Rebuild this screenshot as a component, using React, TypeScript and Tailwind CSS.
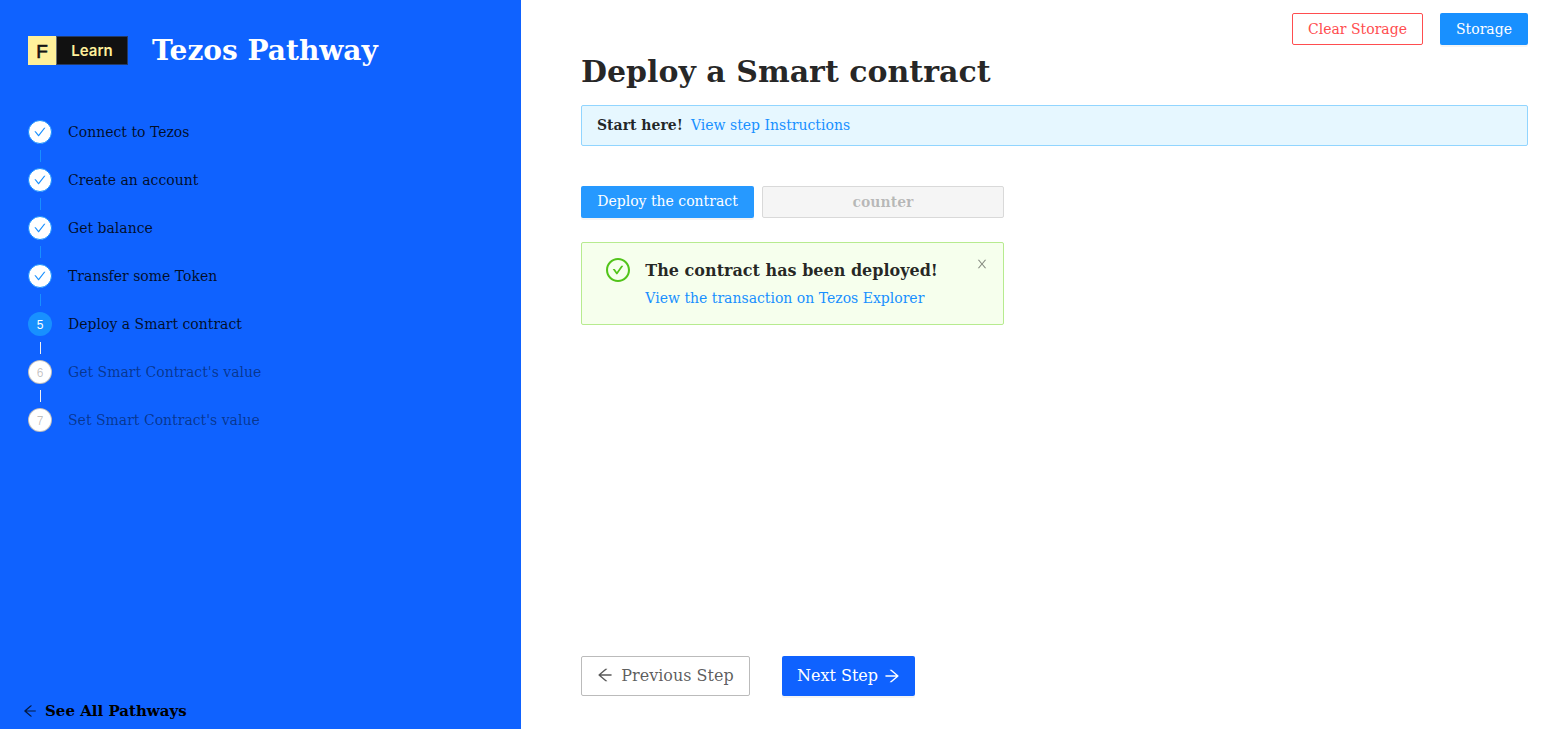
import React from 'react';
import {
  AiOutlineArrowLeft,
  AiOutlineArrowRight,
  AiOutlineCheck,
  AiOutlineCheckCircle,
} from 'react-icons/ai';

const iconBox = '64 64 896 896';

const steps = [
  'Connect to Tezos',
  'Create an account',
  'Get balance',
  'Transfer some Token',
  'Deploy a Smart contract',
  "Get Smart Contract's value",
  "Set Smart Contract's value",
];
const current = 4;

function Logo() {
  return (
    <div className="flex h-[29px] w-[100px] leading-none">
      <div className="flex w-[28px] items-center justify-center bg-[#fff09b] pt-0.5 font-['Liberation_Sans',sans-serif] text-[19px] text-[#141414] [-webkit-text-stroke:0.6px_#141414]">
        F
      </div>
      <div className="flex w-[72px] items-center justify-center border border-[#243a66] border-l-[#6b7070] bg-[#111111] font-['Inter',sans-serif] text-[15px] font-semibold text-[#fff09b]">
        Learn
      </div>
    </div>
  );
}

function CloseIcon() {
  return (
    <svg width="12" height="12" viewBox={iconBox} fill="currentColor" className="text-black/45">
      <path d="M563.8 512l262.5-312.9c4.4-5.2.7-13.1-6.1-13.1h-79.8c-4.7 0-9.2 2.1-12.3 5.7L511.6 449.8 295.1 191.7c-3-3.6-7.5-5.7-12.3-5.7H203c-6.8 0-10.5 7.9-6.1 13.1L459.4 512 196.9 824.9A7.95 7.95 0 00203 838h79.8c4.7 0 9.2-2.1 12.3-5.7l216.5-258.1 216.5 258.1c3 3.6 7.5 5.7 12.3 5.7h79.8c6.8 0 10.5-7.9 6.1-13.1L563.8 512z" />
    </svg>
  );
}

function StepIcon({ index }: { index: number }) {
  if (index < current) {
    return (
      <span className="flex size-6 items-center justify-center rounded-full border border-[#1890ff] bg-white text-[#1890ff]">
        <AiOutlineCheck size={12} viewBox={iconBox} />
      </span>
    );
  }
  if (index === current) {
    return (
      <span className="flex size-6 items-center justify-center rounded-full bg-[#1890ff] pt-px font-['Liberation_Sans',sans-serif] text-xs text-white">
        {index + 1}
      </span>
    );
  }
  return (
    <span className="flex size-6 items-center justify-center rounded-full border border-black/25 bg-white pt-px font-['Liberation_Sans',sans-serif] text-xs text-black/25">
      {index + 1}
    </span>
  );
}

function Sidebar() {
  return (
    <aside className="flex w-[521px] shrink-0 flex-col bg-[#0f62ff]">
      <div className="flex h-[100px] items-center gap-6 pl-7">
        <Logo />
        <h1 className="pt-0.5 text-[28px] leading-10 font-bold text-white">Tezos Pathway</h1>
      </div>
      <ol className="flex flex-col pt-5 pl-7">
        {steps.map((label, i) => (
          <li key={label} className="flex h-12 gap-4">
            <div className="flex w-6 flex-col items-center">
              <StepIcon index={i} />
              {i < steps.length - 1 && (
                <span
                  className={
                    i < current
                      ? 'mt-1.5 ml-px h-3 w-px bg-[#1890ff]'
                      : 'mt-1.5 ml-px h-3 w-px bg-[#f0f0f0]'
                  }
                />
              )}
            </div>
            <span className={i <= current ? 'leading-6 text-black/85' : 'leading-6 text-black/45'}>
              {label}
            </span>
          </li>
        ))}
      </ol>
      <a className="mt-auto flex h-9 items-center gap-2 pl-[23px] text-[#000000]">
        <AiOutlineArrowLeft size={14} viewBox={iconBox} className="text-black/75" />
        <span className="pt-0.5 text-[15px] font-bold">See All Pathways</span>
      </a>
    </aside>
  );
}

export default function App() {
  return (
    <div className="flex h-[729px] w-[1561px] bg-white font-['DejaVu_Serif',serif] text-sm text-black/85">
      <Sidebar />
      <main className="flex flex-1 flex-col pt-[13px] pr-[33px] pb-[33px] pl-[60px]">
        <div className="flex justify-end gap-[17px]">
          <button className="h-8 w-[131px] rounded-[2px] border border-[#ff4d4f] text-[#ff4d4f]">
            Clear Storage
          </button>
          <button className="h-8 w-[88px] rounded-[2px] bg-[#1890ff] text-white shadow-[0_2px_0_rgba(0,0,0,0.045)]">
            Storage
          </button>
        </div>
        <h2 className="mt-[7px] text-[30px] leading-10 font-bold">Deploy a Smart contract</h2>
        <div className="mt-[13px] flex h-[41px] items-center gap-2 rounded-[2px] border border-[#91d5ff] bg-[#e6f7ff] px-[15px] pb-px">
          <strong>Start here!</strong>
          <a className="text-[#1890ff]">View step Instructions</a>
        </div>
        <div className="mt-10 flex w-[423px] gap-2">
          <button className="h-8 w-[173px] rounded-[2px] bg-[#2699ff] pb-0.5 text-white shadow-[0_2px_0_rgba(0,0,0,0.045)]">
            Deploy the contract
          </button>
          <div className="flex h-8 flex-1 items-center justify-center rounded-[2px] border border-[#d9d9d9] bg-[#f5f5f5] font-bold text-black/25">
            counter
          </div>
        </div>
        <div className="mt-6 flex h-[83px] w-[423px] rounded-[2px] border border-[#b7eb8f] bg-[#f6ffed] pt-[15px] pr-[15px] pl-6">
          <AiOutlineCheckCircle size={24} viewBox={iconBox} className="text-[#52c41a]" />
          <div className="ml-[15.33px] flex-1">
            <div className="pt-px text-base leading-6 font-bold">The contract has been deployed!</div>
            <a className="mt-1 block leading-[22px] text-[#1890ff]">
              View the transaction on Tezos Explorer
            </a>
          </div>
          <CloseIcon />
        </div>
        <div className="mt-auto flex gap-8 text-base">
          <button className="flex h-10 w-[169px] items-center justify-center gap-2 rounded-[2px] border border-[#bbbbbb] text-black/65">
            <AiOutlineArrowLeft size={16} viewBox={iconBox} className="mb-0.5" />
            Previous Step
          </button>
          <button className="flex h-10 w-[133px] items-center justify-center gap-1.5 rounded-[2px] bg-[#0f62ff] text-white shadow-[0_2px_0_rgba(0,0,0,0.045)]">
            Next Step
            <AiOutlineArrowRight size={16} viewBox={iconBox} />
          </button>
        </div>
      </main>
    </div>
  );
}
